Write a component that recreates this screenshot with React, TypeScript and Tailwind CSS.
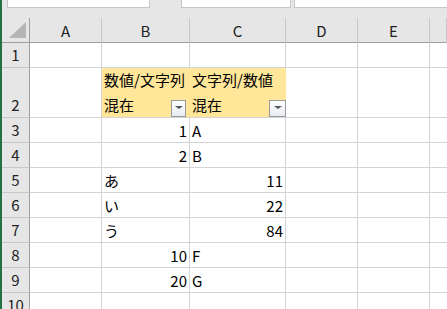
const cols = ['A', 'B', 'C', 'D', 'E', '']

type Cell = { text?: string; align?: 'left' | 'right' }

const rows: { num: string; tall?: boolean; cells: Cell[] }[] = [
  { num: '1', cells: [] },
  { num: '2', tall: true, cells: [] },
  { num: '3', cells: [{}, { text: '1', align: 'right' }, { text: 'A' }] },
  { num: '4', cells: [{}, { text: '2', align: 'right' }, { text: 'B' }] },
  { num: '5', cells: [{}, { text: 'あ' }, { text: '11', align: 'right' }] },
  { num: '6', cells: [{}, { text: 'い' }, { text: '22', align: 'right' }] },
  { num: '7', cells: [{}, { text: 'う' }, { text: '84', align: 'right' }] },
  { num: '8', cells: [{}, { text: '10', align: 'right' }, { text: 'F' }] },
  { num: '9', cells: [{}, { text: '20', align: 'right' }, { text: 'G' }] },
  { num: '10', cells: [] },
]

function FilterButton({ className }: { className: string }) {
  return (
    <div
      className={`absolute bottom-0 h-[17px] flex items-center justify-center border border-[#9a9a9a] bg-gradient-to-b from-[#fdfdfd] to-[#e8ecf2] ${className}`}
    >
      <div className="mb-[2px] w-0 h-0 border-l-[4px] border-r-[4px] border-t-[3px] border-l-transparent border-r-transparent border-t-[#555555]" />
    </div>
  )
}

export default function App() {
  return (
    <div
      className="flex w-[447px] h-[309px] overflow-hidden bg-white text-black"
      style={{ fontFamily: '"Noto Sans CJK JP", "Noto Sans", sans-serif' }}
    >
      <div className="w-[2px] shrink-0 bg-[#217346]" />
      <div className="flex flex-col flex-1 min-w-0">
        {/* formula bar remnants */}
        <div className="h-[18px] shrink-0 bg-[#e6e6e6] flex items-start">
          <div className="ml-[5px] w-[143px] h-[8px] bg-white border border-t-0 border-[#c6c6c6]" />
          <div className="ml-[31px] w-[110px] h-[8px] bg-white border border-t-0 border-[#c6c6c6]" />
          <div className="ml-[3px] flex-1 h-[8px] bg-white border border-t-0 border-r-0 border-[#c6c6c6]" />
        </div>

        <div className="grid grid-cols-[28px_72px_88px_96px_72px_72px_1fr] grid-rows-[25px_25px_50px_repeat(8,25px)] text-[15px]">
          {/* corner */}
          <div className="relative bg-[#e6e6e6] border-r border-b border-[#9e9e9e]">
            <div className="absolute left-[7px] top-[4px] w-[17px] h-[16px] bg-[#b5b5b5] [clip-path:polygon(100%_0,100%_100%,0_100%)]" />
          </div>
          {cols.map((c, i) => (
            <div
              key={i}
              className="bg-[#e6e6e6] border-b border-b-[#9e9e9e] border-r border-r-[#c8c8c8] flex items-center justify-center leading-none text-[#222222]"
            >
              {c}
            </div>
          ))}

          {rows.map((row) => (
            <Row key={row.num} row={row} />
          ))}
        </div>
      </div>
    </div>
  )
}

function Row({ row }: { row: (typeof rows)[number] }) {
  return (
    <>
      <div className="bg-[#e6e6e6] border-r border-r-[#9e9e9e] border-b border-b-[#c8c8c8] flex items-end justify-center pb-[3px] leading-[18px] text-[#222222]">
        {row.num}
      </div>
      {row.tall ? (
        <>
          <div className="border-r border-b border-[#d4d4d4]" />
          <div className="relative bg-[#ffe699] border-r border-r-[#ffe699] border-b border-b-[#d4d4d4] flex flex-col justify-end pl-[2px] leading-[25px]">
            <span className="whitespace-nowrap">数値/文字列</span>
            <span>混在</span>
            <FilterButton className="right-[3px] w-[15px]" />
          </div>
          <div className="relative bg-[#ffe699] border-b border-b-[#d4d4d4] flex flex-col justify-end pl-[2px] leading-[25px]">
            <span className="whitespace-nowrap">文字列/数値</span>
            <span>混在</span>
            <FilterButton className="right-0 w-[17px]" />
          </div>
          <div className="border-r border-b border-[#d4d4d4]" />
          <div className="border-r border-b border-[#d4d4d4]" />
          <div className="border-b border-[#d4d4d4]" />
        </>
      ) : (
        [0, 1, 2, 3, 4, 5].map((i) => {
          const cell = row.cells[i] || {}
          return (
            <div
              key={i}
              className={`border-b border-[#d4d4d4] ${i < 5 ? 'border-r' : ''} flex items-center leading-none ${
                cell.align === 'right' ? 'justify-end pr-[2px]' : 'justify-start pl-[2px]'
              }`}
            >
              {cell.text}
            </div>
          )
        })
      )}
    </>
  )
}
